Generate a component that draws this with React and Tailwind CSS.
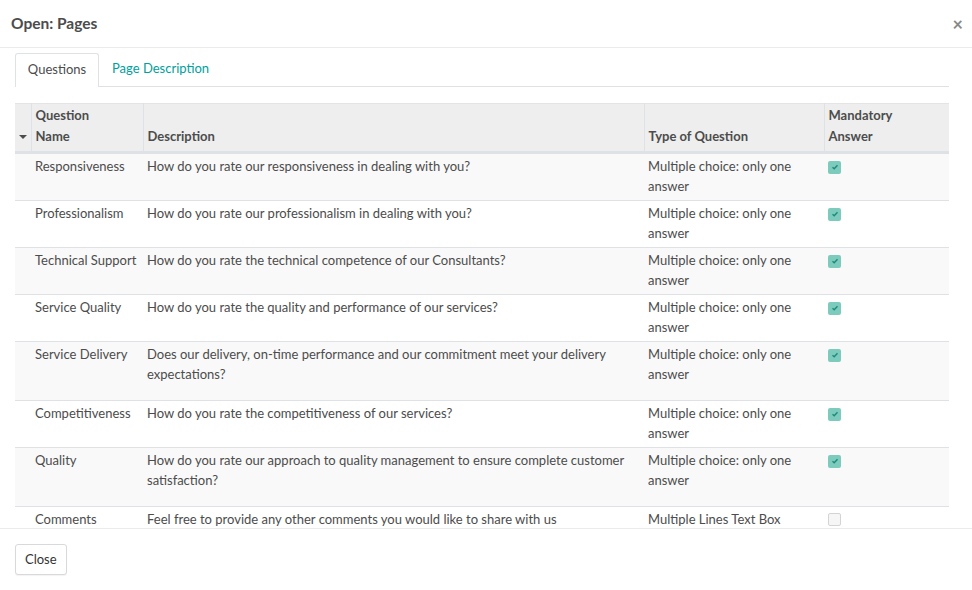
const rows = [
  ['Responsiveness', 'How do you rate our responsiveness in dealing with you?', 'Multiple choice: only one answer', true, false],
  ['Professionalism', 'How do you rate our professionalism in dealing with you?', 'Multiple choice: only one answer', true, false],
  ['Technical Support', 'How do you rate the technical competence of our Consultants?', 'Multiple choice: only one answer', true, false],
  ['Service Quality', 'How do you rate the quality and performance of our services?', 'Multiple choice: only one answer', true, false],
  ['Service Delivery', 'Does our delivery, on-time performance and our commitment meet your delivery expectations?', 'Multiple choice: only one answer', true, true],
  ['Competitiveness', 'How do you rate the competitiveness of our services?', 'Multiple choice: only one answer', true, false],
  ['Quality', 'How do you rate our approach to quality management to ensure complete customer satisfaction?', 'Multiple choice: only one answer', true, true],
  ['Comments', 'Feel free to provide any other comments you would like to share with us', 'Multiple Lines Text Box', false, false],
];

function Check({ on }) {
  if (!on) {
    return <span className="inline-block w-[13px] h-[13px] rounded-[2px] border border-[#d4d4d4] bg-[#f6f6f6]" />;
  }
  return (
    <span className="inline-flex w-[13px] h-[13px] rounded-[2px] bg-[#7ccbbd] items-center justify-center">
      <svg width="8" height="8" viewBox="0 0 8 8">
        <path d="M1.5 4.2 L3.2 5.8 L6.5 2.2" stroke="#1f8a7a" strokeWidth="1.4" fill="none" />
      </svg>
    </span>
  );
}

export default function App() {
  return (
    <div className="w-[972px] h-[590px] bg-white flex flex-col text-[13px] text-[#4c4c4c]"
         style={{ fontFamily: 'Lato, "Open Sans", sans-serif' }}>
      <div className="h-[48px] shrink-0 flex items-center justify-between pl-[11px] pr-[9px] border-b border-[#e9ecef]">
        <h4 className="text-[15.5px] font-bold text-[#4c4c4c]">Open: Pages</h4>
        <span className="text-[18px] leading-none text-[#888] font-bold">×</span>
      </div>

      <div className="flex-1 overflow-hidden pl-[15px] pr-[23px] pt-[5px]">
        <div className="flex border-b border-[#dee2e6] h-[34px]">
          <div className="w-[84px] border border-b-0 border-[#dee2e6] rounded-t-[3px] bg-white flex justify-center pt-[6px] -mb-px">
            Questions
          </div>
          <div className="px-[13px] pt-[6px] text-[#00a09d]">Page Description</div>
        </div>

        <table className="mt-[16px] w-[934px] table-fixed border-collapse">
          <colgroup>
            <col className="w-[16px]" />
            <col className="w-[112px]" />
            <col className="w-[501px]" />
            <col className="w-[180px]" />
            <col className="w-[125px]" />
          </colgroup>
          <thead>
            <tr className="bg-[#eeeeee] border-b-[3px] border-[#dee2e6] align-bottom font-bold leading-[21px] border-t border-t-[#e4e4e4]">
              <th className="pb-[4px] pt-[1px] text-left border-r border-[#dee2e6]">
                <svg width="16" height="21" viewBox="0 0 16 21"><path d="M4 9 L12 9 L8 13 Z" fill="#4c4c4c" /></svg>
              </th>
              <th className="px-[4px] pb-[4px] pt-[1px] text-left border-r border-[#dee2e6]">Question<br />Name</th>
              <th className="px-[4px] pb-[4px] pt-[1px] text-left border-r border-[#dee2e6]">Description</th>
              <th className="px-[4px] pb-[4px] pt-[1px] text-left border-r border-[#dee2e6]">Type of Question</th>
              <th className="px-[4px] pb-[4px] pt-[1px] text-left">Mandatory<br />Answer</th>
            </tr>
          </thead>
          <tbody>
            {rows.map((r, i) => {
              const pad = r[4] ? 'pt-[2px] pb-[16px]' : 'pt-[2px] pb-[4px]';
              return (
                <tr key={i} className={`border-b border-[#dee2e6] align-top leading-[20px] ${i % 2 === 0 ? 'bg-[#f9f9f9]' : 'bg-white'}`}>
                  <td className={pad} />
                  <td className={`px-[4px] whitespace-nowrap ${pad}`}>{r[0]}</td>
                  <td className={`px-[4px] ${pad}`}>{r[1]}</td>
                  <td className={`px-[4px] ${pad}`}>{r[2]}</td>
                  <td className={`px-[4px] ${pad}`}><span className="block pt-[4px] leading-none"><Check on={r[3]} /></span></td>
                </tr>
              );
            })}
          </tbody>
        </table>
      </div>

      <div className="h-[62px] shrink-0 border-t border-[#e9ecef] flex items-center pl-[15px]">
        <button className="h-[31px] px-[9px] border border-[#d9d9d9] rounded-[3px] bg-white text-[#333] shadow-[0_1px_1px_rgba(0,0,0,0.05)]">
          Close
        </button>
      </div>
    </div>
  );
}
